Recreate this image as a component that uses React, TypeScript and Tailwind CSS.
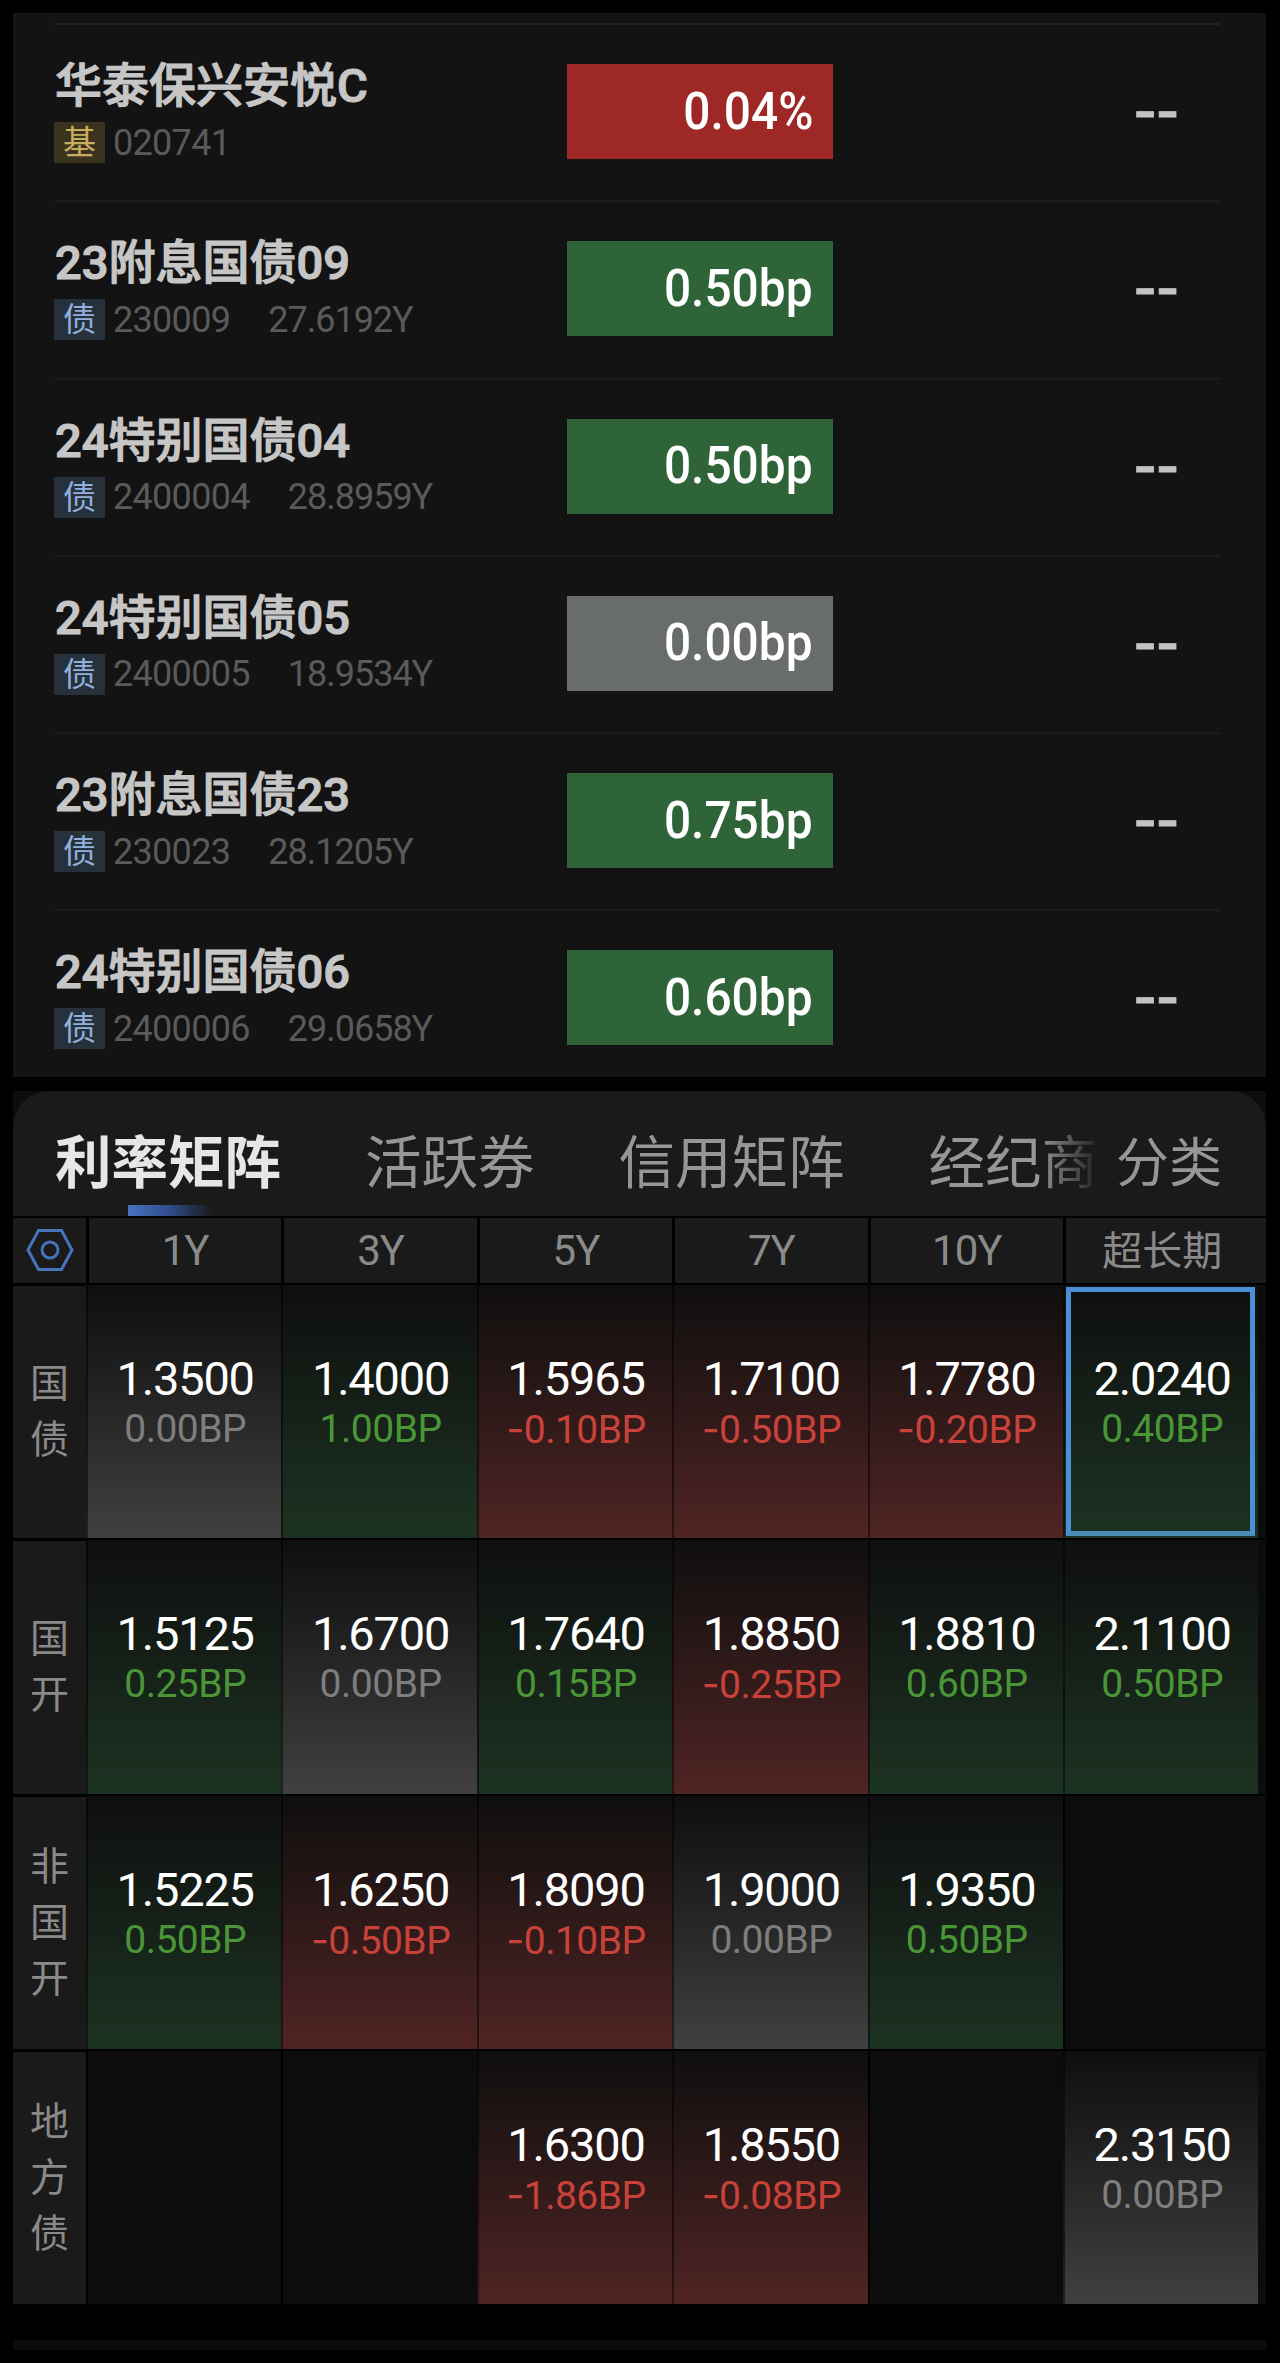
import clsx from "clsx";

type Tone = "up" | "down" | "flat";

interface Bond {
  name: string;
  tag: string;
  code: string;
  term?: string;
  change: string;
  tone: Tone;
}

interface Quote {
  rate: string;
  bp: string;
  tone: Tone;
  selected?: boolean;
}

const bonds: Bond[] = [
  { name: "华泰保兴安悦C", tag: "基", code: "020741", change: "0.04%", tone: "down" },
  { name: "23附息国债09", tag: "债", code: "230009", term: "27.6192Y", change: "0.50bp", tone: "up" },
  { name: "24特别国债04", tag: "债", code: "2400004", term: "28.8959Y", change: "0.50bp", tone: "up" },
  { name: "24特别国债05", tag: "债", code: "2400005", term: "18.9534Y", change: "0.00bp", tone: "flat" },
  { name: "23附息国债23", tag: "债", code: "230023", term: "28.1205Y", change: "0.75bp", tone: "up" },
  { name: "24特别国债06", tag: "债", code: "2400006", term: "29.0658Y", change: "0.60bp", tone: "up" },
];

const q = (rate: string, bp: string, tone: Tone, selected = false): Quote => ({ rate, bp, tone, selected });

const terms = ["1Y", "3Y", "5Y", "7Y", "10Y", "超长期"];

const matrix: { label: string; cells: (Quote | null)[] }[] = [
  {
    label: "国债",
    cells: [
      q("1.3500", "0.00BP", "flat"),
      q("1.4000", "1.00BP", "up"),
      q("1.5965", "-0.10BP", "down"),
      q("1.7100", "-0.50BP", "down"),
      q("1.7780", "-0.20BP", "down"),
      q("2.0240", "0.40BP", "up", true),
    ],
  },
  {
    label: "国开",
    cells: [
      q("1.5125", "0.25BP", "up"),
      q("1.6700", "0.00BP", "flat"),
      q("1.7640", "0.15BP", "up"),
      q("1.8850", "-0.25BP", "down"),
      q("1.8810", "0.60BP", "up"),
      q("2.1100", "0.50BP", "up"),
    ],
  },
  {
    label: "非国开",
    cells: [
      q("1.5225", "0.50BP", "up"),
      q("1.6250", "-0.50BP", "down"),
      q("1.8090", "-0.10BP", "down"),
      q("1.9000", "0.00BP", "flat"),
      q("1.9350", "0.50BP", "up"),
      null,
    ],
  },
  {
    label: "地方债",
    cells: [
      null,
      null,
      q("1.6300", "-1.86BP", "down"),
      q("1.8550", "-0.08BP", "down"),
      null,
      q("2.3150", "0.00BP", "flat"),
    ],
  },
];

const badgeBg: Record<Tone, string> = {
  up: "bg-[#2e6437]",
  down: "bg-[#9d2826]",
  flat: "bg-[#686d6b]",
};

const cellBg: Record<Tone, string> = {
  up: "bg-linear-to-b from-[#0e0f0e] to-[#1c3323]",
  down: "bg-linear-to-b from-[#0f0e0e] to-[#512424]",
  flat: "bg-linear-to-b from-[#0f0f0f] to-[#404040]",
};

const bpColor: Record<Tone, string> = {
  up: "text-[#4a9637]",
  down: "text-[#c9423a]",
  flat: "text-[#7e7e7e]",
};

const BondRow = ({ bond, first }: { bond: Bond; first: boolean }) => (
  <div
    className={clsx(
      "flex h-[177.3px] items-start border-t-2 pr-[41px]",
      first ? "border-[#212121]" : "border-[#1b1c1b]"
    )}
  >
    <div className="w-[513px] pt-[31px]">
      <div className="pl-px text-[47px] leading-[60px] font-medium whitespace-nowrap text-[#c6c6c6] [-webkit-text-stroke:1.2px_#c6c6c6]">
        {bond.name}
      </div>
      <div className="mt-[6px] flex h-[41px] items-center">
        <span
          className={clsx(
            "flex h-[41px] w-[51px] items-center justify-center text-[33px] leading-none",
            bond.tag === "基" ? "bg-[#3a3320] text-[#c9ac5c]" : "bg-[#26313c] text-[#90b0dc]"
          )}
        >
          {bond.tag}
        </span>
        <span className="ml-[8px] text-[36px] leading-none tracking-[-0.7px] text-[#5a5a5a]">{bond.code}</span>
        {bond.term && (
          <span className="ml-[38px] text-[36px] leading-none tracking-[-1px] text-[#5a5a5a]">{bond.term}</span>
        )}
      </div>
    </div>
    <div className={clsx("mt-[39px] flex h-[95px] w-[266px] items-center justify-end pr-[20px]", badgeBg[bond.tone])}>
      <span className="origin-right scale-x-[0.92] text-[52px] leading-none font-medium text-white">{bond.change}</span>
    </div>
    <div className="flex-1 pt-[50px] text-right font-['Liberation_Sans',sans-serif] text-[68px] leading-[68px] text-[#c4c2c2] [-webkit-text-stroke:1px_#c4c2c2]">
      --
    </div>
  </div>
);

const SettingsIcon = () => (
  <svg width="48" height="44" viewBox="0 0 48 44" fill="none" stroke="#4674bb" strokeWidth="3">
    <path d="M12.5 2.500h23L46 22 35.500 41.500h-23L2 22z" />
    <circle cx="24" cy="22" r="8" />
  </svg>
);

const MatrixCell = ({ quote }: { quote: Quote | null }) => {
  if (!quote) {
    return <div className="border-t-2 border-l-2 border-black bg-[#0c0c0c]" />;
  }
  const negative = quote.bp.startsWith("-");
  return (
    <div
      className={clsx(
        "relative flex flex-col items-center border-t-2 border-l-2 border-t-black border-l-black/50 pt-[67px] pl-px",
        cellBg[quote.tone]
      )}
    >
      <span className="text-[47px] leading-[54px] tracking-[-1.2px] text-white">{quote.rate}</span>
      <span className={clsx("text-[39px] leading-[46px] tracking-[-0.5px]", bpColor[quote.tone])}>
        {/* Roboto's hyphen is too short next to its digits */}
        {negative && <span className="font-[Inter]">-</span>}
        {negative ? quote.bp.slice(1) : quote.bp}
      </span>
      {quote.selected && (
        <div className="absolute top-[2px] right-[3px] bottom-[2px] left-px border-[5.5px] border-[#4b90d6] border-b-[#4a8cb8]" />
      )}
    </div>
  );
};

export default function App() {
  return (
    <div className="h-[2363px] w-[1280px] overflow-hidden bg-black pt-[13px] pl-[13px] font-[Roboto,'Noto_Sans_CJK_SC',sans-serif]">
      <section className="h-[1064px] w-[1253px] overflow-hidden rounded-tr-[3px] bg-[#131313] pt-[10px] pr-[46px] pl-[41px]">
        {bonds.map((bond, i) => (
          <BondRow key={bond.code} bond={bond} first={i === 0} />
        ))}
      </section>

      <section className="mt-[14px] w-[1253px] bg-[#0c0c0c]">
        <div className="flex h-[125px] rounded-t-[36px] bg-[#1a1a1a] pl-[42px]">
          <div className="relative w-[1047px] overflow-hidden pt-[37px]">
            <div className="flex gap-[84px] text-[56.5px] leading-[72px] whitespace-nowrap text-[#969696]">
              <span className="font-bold text-[#e6e6e6]">利率矩阵</span>
              <span>活跃券</span>
              <span>信用矩阵</span>
              <span>经纪商</span>
            </div>
            <div className="absolute bottom-0 left-[73px] h-[11px] w-[84px] bg-linear-to-r from-[#4a73c0] via-[#2f4c8a] to-transparent" />
            <div className="absolute top-0 right-0 h-full w-[64px] bg-linear-to-r from-transparent to-[#1a1a1a]" />
          </div>
          <span className="ml-[14px] pt-[37px] text-[53px] leading-[72px] text-[#969696]">分类</span>
        </div>

        <div className="grid h-[67px] grid-cols-[73px_repeat(6,195.4px)_1fr] text-[42px] text-[#8a8a8a]">
          <div className="flex items-center justify-center border-t-2 border-black bg-[#1a1a1a] pl-px pb-[2px]">
            <SettingsIcon />
          </div>
          {terms.map((term) => (
            <div key={term} className="flex items-center justify-center border-t-2 border-l-3 border-black bg-[#1a1a1a]">
              <span className={term === "超长期" ? "pt-[2px] text-[40px]" : "tracking-[-1px]"}>{term}</span>
            </div>
          ))}
          <div className="border-t-2 border-black bg-[#1a1a1a]" />
        </div>

        {matrix.map((row) => (
          <div key={row.label} className="grid h-[255.25px] grid-cols-[73px_repeat(6,195.4px)_1fr]">
            <div className="flex flex-col items-center justify-center border-t-3 border-black bg-[#1a1a1a] text-[39px] leading-[56px] text-[#8a8a8a]">
              {row.label.split("").map((ch, i) => (
                <span key={i}>{ch}</span>
              ))}
            </div>
            {row.cells.map((cell, i) => (
              <MatrixCell key={i} quote={cell} />
            ))}
            <div className="border-t-2 border-black" />
          </div>
        ))}
      </section>

      <div className="mt-[36px] h-[10px] w-[1253px] bg-[#0c0c0c]" />
    </div>
  );
}
